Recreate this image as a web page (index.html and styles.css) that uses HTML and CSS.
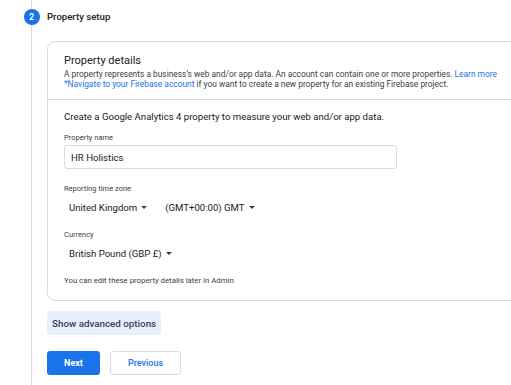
FILE: index.html
```
<!DOCTYPE html>
<html lang="en">
<head>
    <meta charset="UTF-8">
    <title>Property setup</title>
    <link rel="stylesheet" href="styles.css">
</head>
<body>
    <div class="step">
        <div class="rail">
            <div class="rail-top"></div>
            <div class="step-number">2</div>
            <div class="rail-line"></div>
        </div>

        <div class="step-content">
            <h2 class="step-title">Property setup</h2>

            <div class="card">
                <div class="card-header">
                    <h3>Property details</h3>
                    <p class="card-desc">
                        A property represents a business’s web and/or app data. An account can contain one or more properties.
                        <a href="#">Learn more</a><br>
                        <a href="#">*Navigate to your Firebase account</a> if you want to create a new property for an existing Firebase project.
                    </p>
                </div>

                <div class="card-body">
                    <p class="intro">Create a Google Analytics 4 property to measure your web and/or app data.</p>

                    <div class="form-group">
                        <label for="propertyName">Property name</label>
                        <input type="text" id="propertyName" value="HR Holistics">
                    </div>

                    <div class="form-group">
                        <label>Reporting time zone</label>
                        <div class="select-row">
                            <span class="dropdown">United Kingdom <span class="caret"></span></span>
                            <span class="dropdown">(GMT+00:00) GMT <span class="caret"></span></span>
                        </div>
                    </div>

                    <div class="form-group">
                        <label>Currency</label>
                        <div class="select-row">
                            <span class="dropdown">British Pound (GBP £) <span class="caret"></span></span>
                        </div>
                    </div>

                    <p class="note">You can edit these property details later in Admin</p>
                </div>
            </div>

            <button class="advanced">Show advanced options</button>

            <div class="actions">
                <button class="btn-primary">Next</button>
                <button class="btn-secondary">Previous</button>
            </div>
        </div>
    </div>
</body>
</html>
```

FILE: styles.css
```
body {
    margin: 0;
    height: 385px;
    overflow: hidden;
    background-color: #fff;
    font-family: Roboto, "Liberation Sans", Arial, sans-serif;
    color: #202124;
}
.step {
    display: flex;
    height: 385px;
    padding-left: 23px;
}
.rail {
    width: 17px;
    flex-shrink: 0;
    display: flex;
    flex-direction: column;
    align-items: center;
}
.rail-top {
    width: 1px;
    height: 9px;
    background-color: #dadce0;
}
.rail-line {
    width: 1px;
    flex: 1;
    background-color: #dadce0;
}
.step-number {
    width: 16px;
    height: 16px;
    border-radius: 50%;
    background-color: #1a73e8;
    color: #fff;
    font-size: 9px;
    font-weight: bold;
    line-height: 16px;
    text-align: center;
}
.step-content {
    padding-left: 7px;
    overflow: hidden;
}
.step-title {
    margin: 9px 0 0;
    height: 16px;
    line-height: 16px;
    font-size: 9.6px;
    font-weight: 500;
    color: #202124;
}
.card {
    margin-top: 16px;
    width: 520px;
    border: 1px solid #dadce0;
    border-radius: 8px;
}
.card-header {
    padding: 11px 16px 10px;
    border-bottom: 1px solid #dadce0;
}
.card-header h3 {
    margin: 0;
    font-size: 11px;
    font-weight: normal;
    line-height: 16px;
    color: #202124;
}
.card-desc {
    margin: 0;
    font-size: 8.4px;
    line-height: 10px;
    color: #3c4043;
}
.card-desc a {
    color: #1a73e8;
    text-decoration: none;
}
.card-body {
    padding: 11px 16px 14px;
}
.intro {
    margin: 0;
    font-size: 9.6px;
    line-height: 12px;
    color: #202124;
}
.form-group {
    margin-top: 10px;
}
.form-group + .form-group {
    margin-top: 15px;
}
label {
    display: block;
    font-size: 7.5px;
    line-height: 10px;
    color: #3c4043;
    margin-bottom: 2px;
}
input {
    width: 333px;
    height: 24px;
    box-sizing: border-box;
    padding: 0 6px;
    border: 1px solid #dadce0;
    border-radius: 3px;
    font-family: inherit;
    font-size: 9.6px;
    color: #202124;
}
.select-row {
    display: flex;
    gap: 18px;
    padding: 3px 0 0 5px;
}
.dropdown {
    display: inline-flex;
    align-items: center;
    gap: 4px;
    height: 16px;
    font-size: 9.6px;
    color: #202124;
}
.caret {
    width: 0;
    height: 0;
    border-left: 3.5px solid transparent;
    border-right: 3.5px solid transparent;
    border-top: 3.5px solid #3c4043;
}
.note {
    margin: 15px 0 0;
    font-size: 7.8px;
    line-height: 10px;
    color: #3c4043;
}
button {
    font-family: inherit;
    cursor: pointer;
}
.advanced {
    display: block;
    margin-top: 10px;
    height: 24px;
    padding: 0 5px;
    border: none;
    border-radius: 4px;
    background-color: #e8f0fe;
    color: #34415e;
    font-size: 9.8px;
    font-weight: 500;
}
.actions {
    display: flex;
    gap: 10px;
    margin-top: 16px;
}
.btn-primary {
    width: 53px;
    height: 24px;
    border: none;
    border-radius: 3px;
    background-color: #1a73e8;
    color: #fff;
    font-size: 9px;
    font-weight: bold;
}
.btn-secondary {
    width: 71px;
    height: 24px;
    border: 1px solid #dadce0;
    border-radius: 3px;
    background-color: #fff;
    color: #1a73e8;
    font-size: 9px;
    font-weight: 500;
}
```
